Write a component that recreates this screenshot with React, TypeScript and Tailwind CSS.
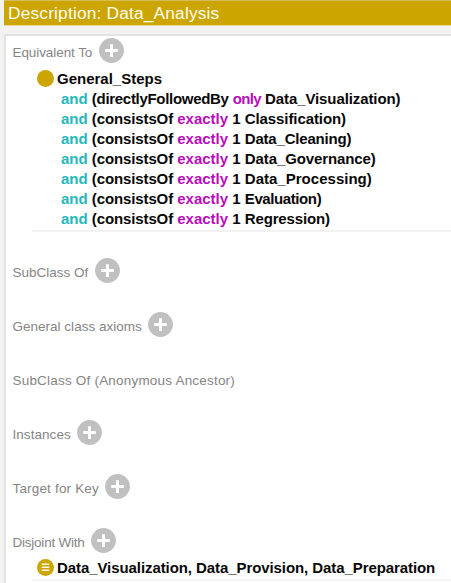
import type { ReactNode } from "react";

function AddButton() {
  return (
    <button type="button" aria-label="Add" className="shrink-0">
      <svg width="25" height="25" viewBox="0 0 25 25" className="block">
        <circle cx="12.5" cy="12.5" r="12.4" fill="#c0c0c0" />
        <path d="M12.5 6.3v12.6M6.2 12.6h12.6" stroke="#fff" strokeWidth="3" />
      </svg>
    </button>
  );
}

function Heading({ text, track, add = true }: { text: string; track: string; add?: boolean }) {
  return (
    <div className="flex h-[26px] items-center gap-[6.5px] pl-[5.5px] text-[13.5px] text-[#858585]">
      <span className={`whitespace-nowrap pt-[5px] leading-[20px] ${track}`}>{text}</span>
      {add && <AddButton />}
    </div>
  );
}

function Axiom({ children }: { children: ReactNode }) {
  return <div className="h-5 whitespace-nowrap pt-px pl-[29px] leading-5">{children}</div>;
}

function Row({ icon, children }: { icon: ReactNode; children: ReactNode }) {
  return (
    <div className="flex h-5 items-center whitespace-nowrap leading-5">
      <span className="mr-[3px] ml-[5px] shrink-0">{icon}</span>
      {children}
    </div>
  );
}

const axioms = [
  { name: "Classification", track: "tracking-[-0.09px]" },
  { name: "Data_Cleaning", track: "tracking-[-0.2px]" },
  { name: "Data_Governance", track: "tracking-[-0.1px]" },
  { name: "Data_Processing", track: "tracking-[0.02px]" },
  { name: "Evaluation", track: "tracking-[-0.4px]" },
  { name: "Regression", track: "tracking-[-0.15px]" },
];

export default function App() {
  return (
    <div className="flex h-[583px] w-[451px] flex-col overflow-hidden bg-[#f2f2f2] pl-[4px] font-['Liberation_Sans',Arial,sans-serif]">
      <header className="h-[26px] shrink-0 border-t border-b border-t-[#d5bd55] border-b-[#ead98f] bg-[#cca500] pl-[4px] text-[17.3px] leading-[25px] tracking-[0.19px] whitespace-nowrap text-[#fffdf0]">
        Description: Data_Analysis
      </header>
      <main className="mt-[8px] flex-1 border-t-2 border-l-2 border-[#e3e3e3] bg-white pt-px pl-[1px]">
        <Heading text="Equivalent To" track="tracking-[-0.08px]" />
        <section className="mt-[5px] ml-[25px] h-[164px] border-b-2 border-[#f2f2f2] text-[15px] font-bold text-[#080808]">
          <Row
            icon={
              <svg width="17" height="17" viewBox="0 0 17 17" className="block">
                <circle cx="8.5" cy="8.5" r="8.5" fill="#cca500" />
              </svg>
            }
          >
            <span className="pt-[2px]">General_Steps</span>
          </Row>
          <Axiom>
            <span className="text-[#24b8bb]">and</span>{" "}
            <span className="tracking-[-0.3px]">(directlyFollowedBy</span>{" "}
            <span className="tracking-[-0.7px] text-[#b90db9]">only</span>{" "}
            <span className="tracking-[-0.1px]">Data_Visualization)</span>
          </Axiom>
          {axioms.map(({ name, track }) => (
            <Axiom key={name}>
              <span className="text-[#24b8bb]">and</span> <span className="tracking-[-0.12px]">(consistsOf</span>{" "}
              <span className="text-[#b90db9]">exactly</span> 1 <span className={track}>{name})</span>
            </Axiom>
          ))}
        </section>
        <div className="mt-[25px] flex flex-col gap-[28px]">
          <Heading text="SubClass Of" track="tracking-[0px]" />
          <Heading text="General class axioms" track="tracking-[0.01px]" />
          <Heading text="SubClass Of (Anonymous Ancestor)" track="tracking-[0.2px]" add={false} />
          <Heading text="Instances" track="tracking-[0.05px]" />
          <Heading text="Target for Key" track="tracking-[0.17px]" />
          <Heading text="Disjoint With" track="tracking-[-0.23px]" />
        </div>
        <section className="mt-[4px] ml-[25px] h-[24px] border-b-2 border-[#f5f5f5] text-[15px] font-bold tracking-[-0.08px] text-[#080808]">
          <Row
            icon={
              <svg width="17" height="17" viewBox="0 0 17 17" className="block">
                <circle cx="8.5" cy="8.5" r="8.5" fill="#cca500" />
                <path d="M4.7 5.3h7.6M4.7 8.3h7.6M4.7 11.3h7.6" stroke="#fffbe6" strokeWidth="1.4" />
              </svg>
            }
          >
            <span className="pt-px">Data_Visualization, Data_Provision, Data_Preparation</span>
          </Row>
        </section>
      </main>
    </div>
  );
}
